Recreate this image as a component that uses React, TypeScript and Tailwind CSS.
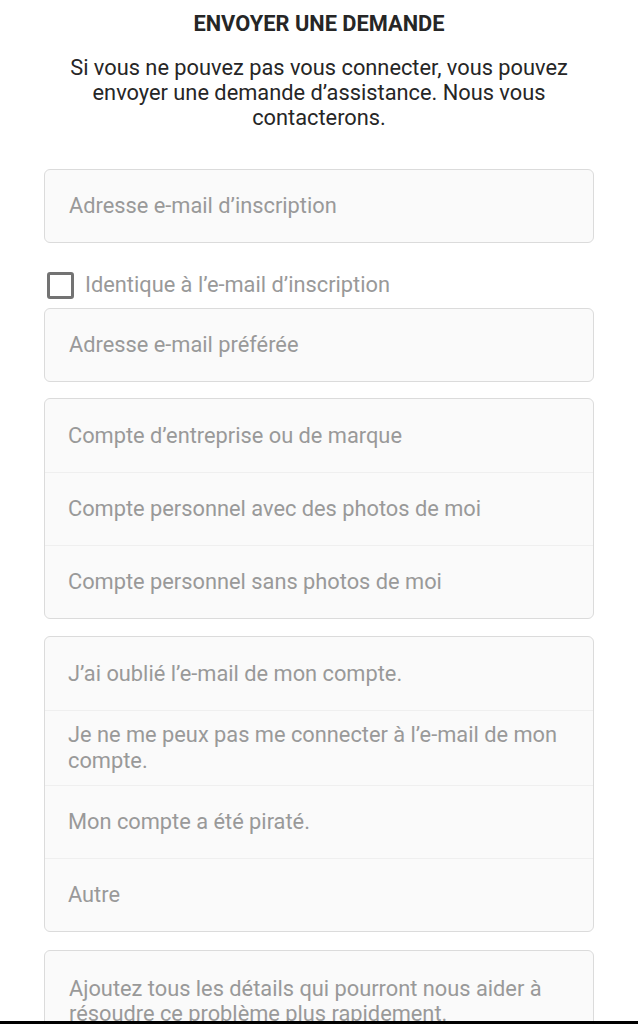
import React from "react";

const accountTypes = [
  "Compte d’entreprise ou de marque",
  "Compte personnel avec des photos de moi",
  "Compte personnel sans photos de moi",
];

const reasons = [
  "J’ai oublié l’e-mail de mon compte.",
  "Je ne me peux pas me connecter à l’e-mail de mon compte.",
  "Mon compte a été piraté.",
  "Autre",
];

function OptionGroup({ items }: { items: string[] }) {
  return (
    <div className="rounded-[6px] border border-[#dbdbdb] bg-[#fafafa]">
      {items.map((label, i) => (
        <div
          key={label}
          className={`flex min-h-[73px] items-center py-[11px] pl-[23px] pr-[30px] text-[21.8px] leading-[26px] text-[#999999] ${
            i > 0 ? "border-t border-[#efefef]" : ""
          }`}
        >
          {label}
        </div>
      ))}
    </div>
  );
}

export default function App() {
  return (
    <div
      className="flex h-[1024px] flex-col overflow-hidden bg-white"
      style={{ fontFamily: "Roboto, 'Noto Sans', sans-serif" }}
    >
      <main className="flex-1 overflow-hidden px-[44px]">
        {/* Header */}
        <h1 className="pt-[12px] text-center text-[21.8px] font-bold leading-[24px] text-[#262626]">
          ENVOYER UNE DEMANDE
        </h1>
        <p className="mx-auto mt-[19px] max-w-[530px] text-center text-[21.8px] leading-[25px] text-[#262626]">
          Si vous ne pouvez pas vous connecter, vous pouvez envoyer une demande
          d’assistance. Nous vous contacterons.
        </p>

        {/* Registration email */}
        <div className="mt-[39px] flex h-[74px] items-center rounded-[6px] border border-[#dbdbdb] bg-[#fafafa] pl-[24px] text-[21.8px] text-[#999999]">
          Adresse e-mail d’inscription
        </div>

        {/* Same as registration */}
        <label className="mt-[28px] flex h-[28px] items-center gap-[11px] pl-[3px]">
          <span className="h-[27px] w-[27px] rounded-[3px] border-[3px] border-[#737373]" />
          <span className="text-[21.8px] text-[#999999]">
            Identique à l’e-mail d’inscription
          </span>
        </label>

        {/* Preferred email */}
        <div className="mt-[9px] flex h-[74px] items-center rounded-[6px] border border-[#dbdbdb] bg-[#fafafa] pl-[24px] text-[21.8px] text-[#999999]">
          Adresse e-mail préférée
        </div>

        <div className="mt-[16px]">
          <OptionGroup items={accountTypes} />
        </div>

        <div className="mt-[17px]">
          <OptionGroup items={reasons} />
        </div>

        {/* Details */}
        <div className="mt-[18px] h-[140px] rounded-[6px] border border-[#dbdbdb] bg-[#fafafa] pl-[24px] pr-[30px] pt-[25px] text-[21.8px] leading-[25px] text-[#999999]">
          Ajoutez tous les détails qui pourront nous aider à résoudre ce
          problème plus rapidement.
        </div>
      </main>
      <div className="h-[3px] bg-black" />
    </div>
  );
}
